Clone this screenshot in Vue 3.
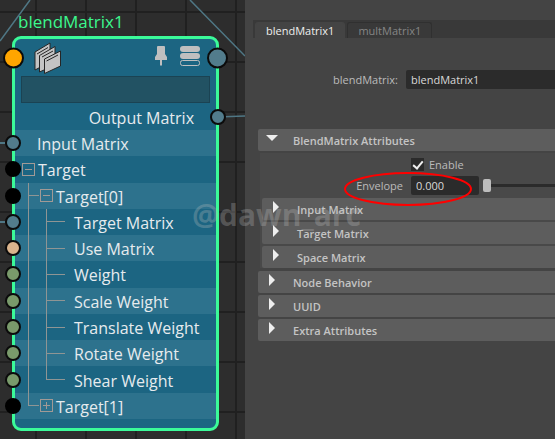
<script setup>
import { ref } from 'vue'

const rows = [
  { label: 'Input Matrix', depth: 0, port: 'steel', wire: true },
  { label: 'Target', depth: 0, port: 'array', toggle: 'minus' },
  { label: 'Target[0]', depth: 1, port: 'array', toggle: 'minus' },
  { label: 'Target Matrix', depth: 2, port: 'steel', wire: true },
  { label: 'Use Matrix', depth: 2, port: 'peach' },
  { label: 'Weight', depth: 2, port: 'green' },
  { label: 'Scale Weight', depth: 2, port: 'green' },
  { label: 'Translate Weight', depth: 2, port: 'green' },
  { label: 'Rotate Weight', depth: 2, port: 'green' },
  { label: 'Shear Weight', depth: 2, port: 'green', last: true },
  { label: 'Target[1]', depth: 1, port: 'array', toggle: 'plus', end: true },
]
const subSections = ['Input Matrix', 'Target Matrix', 'Space Matrix']
const sections = ['Node Behavior', 'UUID', 'Extra Attributes']

const filter = ref('')
const nodeName = ref('blendMatrix1')
const enabled = ref(true)
const envelope = ref('0.000')
const slider = ref(0)
</script>

<template>
  <main class="app">
    <section class="graph">
      <svg class="wires" width="245" height="439" aria-hidden="true">
        <path d="M30 0L0 41M190 0L245 56M217 117L245 116" />
      </svg>
      <h1 class="node-title">blendMatrix1</h1>
      <article class="node">
        <header class="node-head">
          <span class="port big orange left"></span>
          <svg class="stack" width="28" height="32" viewBox="0 0 28 32" aria-hidden="true">
            <path d="M1 10L16 1V20L1 28Z" />
            <path d="M5.5 13.5L21 4.5V23L5.5 30Z" />
            <path d="M10.5 17L26.5 9V24L10.5 31.5Z" />
            <path class="ink" d="M3 12L14 5.5M8 15L19 9M12.5 19L24 13" />
          </svg>
          <svg class="pin" width="14" height="24" viewBox="0 0 14 24" aria-hidden="true">
            <path d="M3 1Q3 0 4 0H10Q11 0 11 1V8L13 11V14H8V19L7 20L6 19V14H1V11L3 8Z" />
          </svg>
          <svg class="bars" width="22" height="24" viewBox="0 0 22 24" aria-hidden="true">
            <rect x="1" y="0" width="20" height="6" rx="3" />
            <rect x="1" y="7" width="20" height="6" rx="3" />
            <rect class="hollow" x="1.5" y="14.5" width="19" height="5" rx="2" />
          </svg>
          <span class="port big steel right"></span>
        </header>
        <input v-model="filter" class="filter" type="text" aria-label="Filter attributes" />
        <div class="output">Output Matrix<span class="port steel right"></span></div>
        <ul class="rows">
          <li
            v-for="row in rows"
            :key="row.label"
            class="row"
            :class="['d' + row.depth, { last: row.last, end: row.end, open: row.toggle === 'minus', wired: row.wire }]"
          >
            <span class="port left" :class="row.port"></span>
            <button
              v-if="row.toggle"
              class="toggle"
              :class="row.toggle"
              type="button"
              :aria-label="'Toggle ' + row.label"
            ></button>
            <span class="row-label">{{ row.label }}</span>
          </li>
        </ul>
      </article>
    </section>

    <section class="editor">
      <nav class="tabs">
        <button class="tab active" type="button">blendMatrix1</button>
        <button class="tab" type="button">multMatrix1</button>
      </nav>
      <div class="name-row">
        <label for="node-name">blendMatrix:</label>
        <input id="node-name" v-model="nodeName" type="text" />
      </div>
      <div class="sections">
        <button class="bar expanded" type="button"><i class="arrow down"></i>BlendMatrix Attributes</button>
        <div class="group">
          <div class="field">
            <label class="check"><input v-model="enabled" type="checkbox" />Enable</label>
          </div>
          <div class="field envelope">
            <label for="envelope">Envelope</label>
            <input id="envelope" v-model="envelope" class="number" type="text" />
            <input v-model="slider" class="slider" type="range" min="0" max="1" step="0.001" aria-label="Envelope slider" />
            <svg class="mark" width="130" height="36" viewBox="0 0 130 36" aria-hidden="true">
              <ellipse cx="65" cy="18" rx="63" ry="16" />
            </svg>
          </div>
          <div class="stacked">
            <button v-for="name in subSections" :key="name" class="bar" type="button"><i class="arrow"></i>{{ name }}</button>
          </div>
        </div>
        <div class="stacked">
          <button v-for="name in sections" :key="name" class="bar" type="button"><i class="arrow"></i>{{ name }}</button>
        </div>
      </div>
    </section>
    <div class="watermark">@dawn_arc</div>
  </main>
</template>

<style>
body {
  background: #444;
}
</style>

<style scoped>
.app {
  position: relative;
  display: flex;
  min-height: 100vh;
  overflow: hidden;
  font-family: "Open Sans", "Noto Sans", sans-serif;
}
button,
input {
  font: inherit;
  color: inherit;
  margin: 0;
  padding: 0;
  border: 0;
  outline: 0;
  box-sizing: border-box;
}
.graph {
  position: relative;
  flex: 0 0 245px;
  box-sizing: border-box;
  padding: 8px 26px 8px 12px;
  background-color: #2d2d2d;
  background-image:
    linear-gradient(90deg, #202020 2px, transparent 2px),
    linear-gradient(#202020 2px, transparent 2px);
  background-size: 50px 50px;
  background-position: 35px 11px;
}
.wires {
  position: absolute;
  left: 0;
  top: 0;
  fill: none;
  stroke: #4f7785;
  stroke-width: 1.5;
}
.node-title {
  position: relative;
  margin: 0;
  padding: 0 6px;
  color: #3cf88d;
  font-size: 17px;
  font-weight: 400;
  line-height: 28px;
}
.node {
  position: relative;
  color: #e6ebee;
  font-size: 16px;
  background: #1c6582;
  border: 3px solid #3bfa99;
  border-radius: 9px;
  padding-bottom: 9px;
}
.node-head {
  position: relative;
  display: flex;
  align-items: center;
  height: 37px;
  padding: 0 15px 0 19px;
}
.stack {
  fill: #c4c4c4;
  stroke: #262626;
}
.stack .ink {
  fill: none;
  stroke-width: 1;
}
.pin {
  margin-left: auto;
  fill: #bfbfbf;
}
.bars {
  margin-left: 11px;
  fill: #bfbfbf;
}
.bars .hollow {
  fill: none;
  stroke: #bfbfbf;
}
.filter {
  display: block;
  width: calc(100% - 12px);
  height: 27px;
  margin: 0 6px;
  padding: 0 4px;
  background: #225263;
  border: 1px solid #1b4353;
}
.output {
  position: relative;
  height: 27px;
  line-height: 30px;
  padding-right: 22px;
  text-align: right;
}
.port {
  position: absolute;
  top: 50%;
  width: 16px;
  height: 16px;
  box-sizing: border-box;
  border: 2px solid #0b0b0b;
  border-radius: 50%;
  transform: translateY(-50%);
  z-index: 1;
}
.port.left { left: -10px; }
.port.right { right: -10px; }
.port.big { width: 21px; height: 21px; }
.port.big.left { left: -12px; }
.port.big.right { right: -12px; }
.steel { background: #527c8c; }
.orange { background: #ffa500; }
.peach { background: #dab48d; }
.green { background: #799a6b; }
.array { background: #000; border-color: #000; }
.rows {
  list-style: none;
  margin: 0;
  padding: 0;
  display: grid;
  grid-auto-rows: 1fr;
  height: 289px;
}
.row {
  position: relative;
  display: flex;
  align-items: center;
}
.row:nth-child(odd) {
  background: #2d728d;
}
.d0 { padding-left: 22px; }
.d0.open { padding-left: 7px; }
.d1 { padding-left: 25px; }
.d2 { padding-left: 59px; }
.row.wired .port::before {
  content: "";
  position: absolute;
  right: 14px;
  top: 5px;
  width: 8px;
  height: 2px;
  background: #4f7785;
}
.d1::before,
.d2::before {
  content: "";
  position: absolute;
  left: 13px;
  top: 0;
  bottom: 0;
  width: 1px;
  background: #8f9594;
}
.row.end::before {
  bottom: 50%;
}
.d1::after {
  content: "";
  position: absolute;
  left: 13px;
  top: calc(50% - 1px);
  width: 11px;
  height: 1px;
  background: #8f9594;
}
.d2::after {
  content: "";
  position: absolute;
  left: 31px;
  top: 0;
  bottom: 0;
  width: 19px;
  background:
    linear-gradient(#8f9594, #8f9594) 0 0 / 1px 100% no-repeat,
    linear-gradient(#8f9594, #8f9594) 0 50% / 100% 1px no-repeat;
}
.d2.last::after {
  bottom: 50%;
  background:
    linear-gradient(#8f9594, #8f9594) 0 0 / 1px 100% no-repeat,
    linear-gradient(#8f9594, #8f9594) 0 100% / 100% 1px no-repeat;
}
.toggle {
  width: 13px;
  height: 13px;
  margin-right: 3px;
  border: 1px solid #a19a96;
  background: linear-gradient(#a19a96, #a19a96) center / 7px 1px no-repeat;
}
.toggle.plus {
  background:
    linear-gradient(#a19a96, #a19a96) center / 7px 1px no-repeat,
    linear-gradient(#a19a96, #a19a96) center / 1px 7px no-repeat;
}
.row-label {
  padding-top: 2px;
  white-space: nowrap;
}

.editor {
  flex: 1;
  min-width: 0;
  padding-top: 20px;
  background: #444;
  color: #bbb;
  font-size: 11px;
}
.tabs {
  display: flex;
  gap: 2px;
  height: 18px;
  margin-left: 8px;
  padding-left: 2px;
  background: #393939;
}
.tab {
  margin-top: 2px;
  padding: 0 10px;
  background: #393939;
  border: 1px solid #303030;
  border-bottom: 0;
  border-radius: 3px 3px 0 0;
  color: #858585;
}
.tab.active {
  background: #444;
  border-color: #444;
  color: #eee;
}
.name-row {
  display: flex;
  align-items: center;
  margin: 32px 0 40px;
}
.name-row label {
  width: 153px;
  margin-right: 8px;
  text-align: right;
}
.name-row input {
  flex: 1;
  min-width: 0;
  height: 19px;
  padding: 0 5px;
  background: #2b2b2b;
  border-radius: 2px 0 0 2px;
  color: #d8d8d8;
}
.sections {
  margin-left: 13px;
}
.bar {
  display: flex;
  align-items: center;
  width: 100%;
  height: 22px;
  padding: 0 11px;
  background: #5d5d5d;
  border-radius: 2px 0 0 2px;
  font-weight: 600;
  color: #c4c4c4;
  text-align: left;
}
.arrow {
  width: 6px;
  height: 12px;
  margin: 0 18px 4px 0;
  background: #eee;
  clip-path: polygon(0 0, 100% 50%, 0 100%);
}
.arrow.down {
  width: 12px;
  height: 6px;
  margin: 0 15px 4px -3px;
  clip-path: polygon(0 0, 100% 0, 50% 100%);
}
.group {
  margin: 2px 0 3px 2px;
  padding: 3px 0 0 2px;
  background: #494949;
}
.field {
  position: relative;
  display: flex;
  align-items: center;
  height: 17px;
}
.check {
  display: flex;
  align-items: center;
  gap: 5px;
  margin-left: 149px;
}
.check input {
  appearance: none;
  width: 13px;
  height: 13px;
  background: #2b2b2b;
  position: relative;
}
.check input:checked::after {
  content: "";
  position: absolute;
  left: 4px;
  top: 1px;
  width: 4px;
  height: 8px;
  border: solid #eee;
  border-width: 0 2px 2px 0;
  transform: rotate(40deg);
}
.envelope {
  height: 25px;
}
.envelope label {
  width: 141px;
  margin-right: 8px;
  text-align: right;
}
.number {
  width: 68px;
  height: 19px;
  padding: 0 5px;
  background: #2b2b2b;
  border-radius: 2px;
  color: #d8d8d8;
}
.slider {
  appearance: none;
  flex: 1;
  min-width: 0;
  height: 13px;
  margin-left: 4px;
  background: linear-gradient(#2b2b2b, #2b2b2b) center / 100% 3px no-repeat;
}
.slider::-webkit-slider-thumb {
  appearance: none;
  width: 8px;
  height: 13px;
  background: #bdbdbd;
  border-radius: 2px;
}
.mark {
  position: absolute;
  left: 81px;
  top: -2px;
  fill: none;
  stroke: #f00;
  stroke-width: 2;
  pointer-events: none;
  z-index: 1;
}
.stacked {
  display: grid;
  gap: 2px;
}
.watermark {
  position: absolute;
  left: 192px;
  top: 197px;
  color: rgba(190, 190, 190, 0.28);
  font: 700 30px/36px "Open Sans", sans-serif;
  pointer-events: none;
}
</style>
